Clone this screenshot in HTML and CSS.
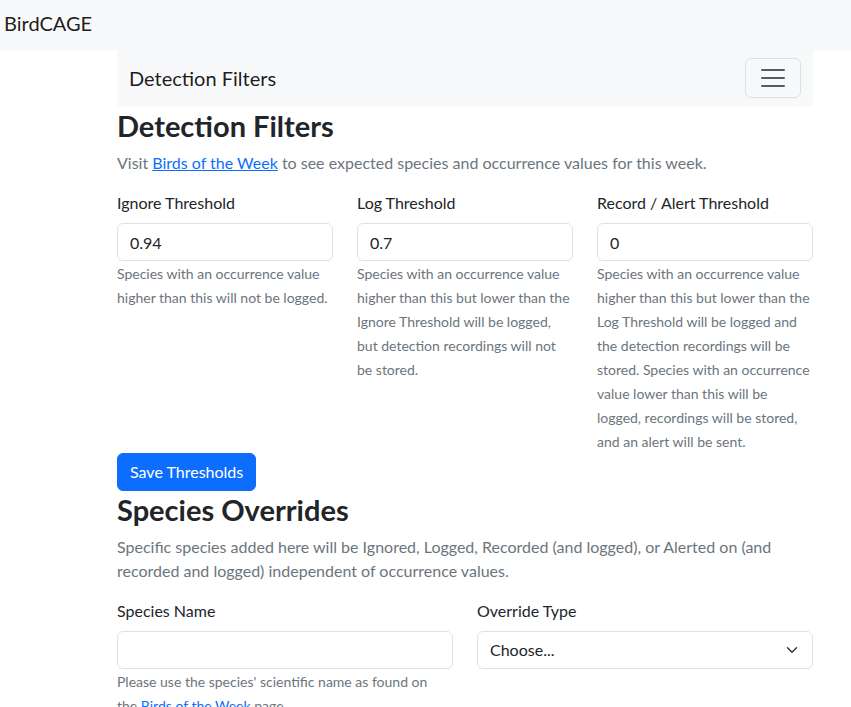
FILE: index.html
```html
<!DOCTYPE html>
<html lang="en">
<head>
<meta charset="utf-8">
<title>BirdCAGE - Detection Filters</title>
<link rel="stylesheet" href="styles.css">
</head>
<body>
<nav class="topbar">
  <a class="brand" href="#">BirdCAGE</a>
</nav>
<main class="container">
  <nav class="subnav">
    <span class="subnav-title">Detection Filters</span>
    <button class="toggler" type="button" aria-label="Toggle navigation">
      <svg width="30" height="30" viewBox="0 0 30 30"><path d="M4 7h22M4 15h22M4 23h22" stroke="rgba(33,37,41,0.75)" stroke-width="2" stroke-linecap="round" fill="none"/></svg>
    </button>
  </nav>

  <h2 class="heading">Detection Filters</h2>
  <p class="lead-muted">Visit <a href="#">Birds of the Week</a> to see expected species and occurrence values for this week.</p>

  <form class="thresholds">
    <div class="cols3">
      <div class="field">
        <label class="label">Ignore Threshold</label>
        <input class="input" type="text" value="0.94">
        <div class="help"><small>Species with an occurrence value higher than this will not be logged.</small></div>
      </div>
      <div class="field">
        <label class="label">Log Threshold</label>
        <input class="input" type="text" value="0.7">
        <div class="help"><small>Species with an occurrence value higher than this but lower than the Ignore Threshold will be logged, but detection recordings will not be stored.</small></div>
      </div>
      <div class="field">
        <label class="label">Record / Alert Threshold</label>
        <input class="input" type="text" value="0">
        <div class="help"><small>Species with an occurrence value higher than this but lower than the Log Threshold will be logged and the detection recordings will be stored. Species with an occurrence value lower than this will be logged, recordings will be stored, and an alert will be sent.</small></div>
      </div>
    </div>
    <button class="btn-primary" type="button">Save Thresholds</button>
  </form>

  <h2 class="heading heading-tight">Species Overrides</h2>
  <p class="lead-muted">Specific species added here will be Ignored, Logged, Recorded (and logged), or Alerted on (and recorded and logged) independent of occurrence values.</p>

  <form class="overrides">
    <div class="cols2">
      <div class="field">
        <label class="label">Species Name</label>
        <input class="input" type="text" value="">
        <div class="help help-narrow"><small>Please use the species' scientific name as found on the <a href="#">Birds of the Week</a> page.</small></div>
      </div>
      <div class="field">
        <label class="label">Override Type</label>
        <div class="select">
          <span>Choose...</span>
          <svg class="chev" width="16" height="12" viewBox="0 0 16 16"><path d="M2 5l6 6 6-6" fill="none" stroke="#343a40" stroke-width="2" stroke-linecap="round" stroke-linejoin="round"/></svg>
        </div>
      </div>
    </div>
  </form>
</main>
</body>
</html>
```
FILE: styles.css
```css
* { box-sizing: border-box; }
body {
  margin: 0;
  font-family: Lato, "Open Sans", sans-serif;
  font-size: 16px;
  line-height: 1.5;
  color: #212529;
  background: #fff;
}
a { color: #0d6efd; text-decoration: underline; }

.topbar {
  background: #f8f9fa;
  height: 50px;
  display: flex;
  align-items: center;
  padding: 0 4px 4px;
}
.brand {
  color: rgba(0,0,0,0.9);
  text-decoration: none;
  font-size: 20px;
  line-height: 30px;
}

.container {
  width: 696px;
  margin: 0 0 0 117px;
}

.subnav {
  background: #f8f9fa;
  height: 56px;
  display: flex;
  align-items: center;
  justify-content: space-between;
  padding: 0 12px;
}
.subnav-title {
  font-size: 20px;
  line-height: 30px;
  color: rgba(0,0,0,0.9);
}
.toggler {
  width: 56px;
  height: 40px;
  padding: 4px 12px;
  display: flex;
  align-items: center;
  justify-content: center;
  background: transparent;
  border: 1px solid rgba(0,0,0,0.1);
  border-radius: 6px;
}

.heading {
  margin: 0 0 8px;
  padding-top: 2px;
  font-size: 29px;
  font-weight: 700;
  line-height: 35px;
}
.heading-tight { padding-top: 1px; }
.lead-muted {
  margin: 0 0 16px;
  color: #6c757d;
}

.cols3 {
  display: grid;
  grid-template-columns: repeat(3, 1fr);
  column-gap: 24px;
}
.cols2 {
  display: grid;
  grid-template-columns: repeat(2, 1fr);
  column-gap: 24px;
}
.label {
  display: block;
  margin-bottom: 8px;
}
.input, .select {
  display: block;
  width: 100%;
  height: 38px;
  padding: 6px 12px;
  font: inherit;
  color: #212529;
  background: #fff;
  border: 1px solid #dee2e6;
  border-radius: 6px;
}
.select {
  display: flex;
  align-items: center;
  justify-content: space-between;
}
.help {
  color: #6c757d;
}
.help small { font-size: 14px; }
.help-narrow { max-width: 320px; }

.btn-primary {
  display: inline-block;
  font: inherit;
  color: #fff;
  background: #0d6efd;
  border: 1px solid #0d6efd;
  border-radius: 6px;
  padding: 6px 12px;
  line-height: 24px;
}
```
